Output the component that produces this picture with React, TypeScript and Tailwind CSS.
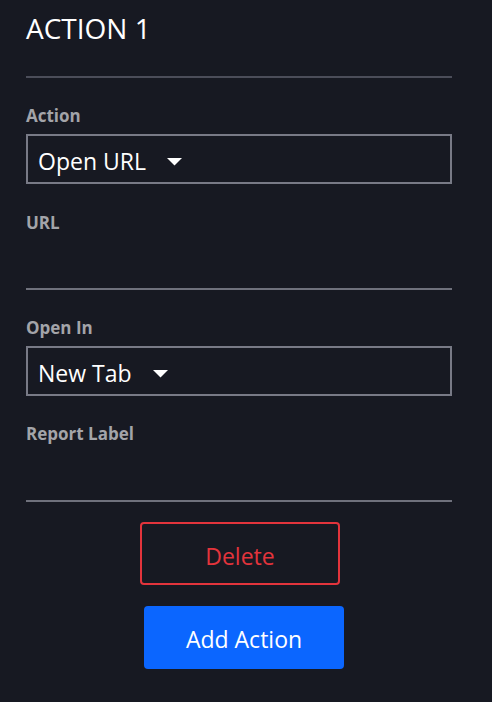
export default function App() {
  return (
    <div className="min-h-screen w-[492px] bg-[#171922] pl-[26px] pr-[40px] pb-[33px] font-['Open_Sans',sans-serif]">
      <h1 className="pt-[10px] text-[28px] leading-[36px] text-white">ACTION 1</h1>
      <div className="mt-[30px] h-[2px] bg-[#4b4d59]" />

      <Label text="Action" />
      <Select value="Open URL" />

      <Label text="URL" className="mt-[25px]" />
      <div className="h-[55px] border-b-2 border-[#6f717c]" />

      <Label text="Open In" />
      <Select value="New Tab" />

      <Label text="Report Label" />
      <div className="h-[56px] border-b-2 border-[#6f717c]" />

      <div className="flex flex-col items-start">
        <button className="ml-[114px] mt-[20px] flex h-[63px] w-[200px] items-center justify-center rounded-[4px] border-2 border-[#e3343c] pt-[5px] text-[23px] text-[#e3343c]">
          Delete
        </button>
        <button className="ml-[118px] mt-[21px] flex h-[63px] w-[200px] items-center justify-center rounded-[4px] bg-[#0b66ff] pt-[4px] text-[23px] text-white">
          Add Action
        </button>
      </div>
    </div>
  );
}

function Label({ text, className = "mt-[24px]" }: { text: string; className?: string }) {
  return <div className={`${className} pt-[2px] text-[17px] font-bold leading-[24px] text-[#a3a4a9]`}>{text}</div>;
}

function Select({ value }: { value: string }) {
  return (
    <div className="mt-[6px] flex h-[50px] items-center border-2 border-[#787a86] pl-[10px]">
      <span className="mt-[4px] text-[23px] leading-[30px] text-white">{value}</span>
      <svg width="15" height="8" viewBox="0 0 15 8" className="ml-[21px] mt-[5px]" aria-hidden="true">
        <path d="M0 0h15L7.5 7.5z" fill="white" />
      </svg>
    </div>
  );
}
